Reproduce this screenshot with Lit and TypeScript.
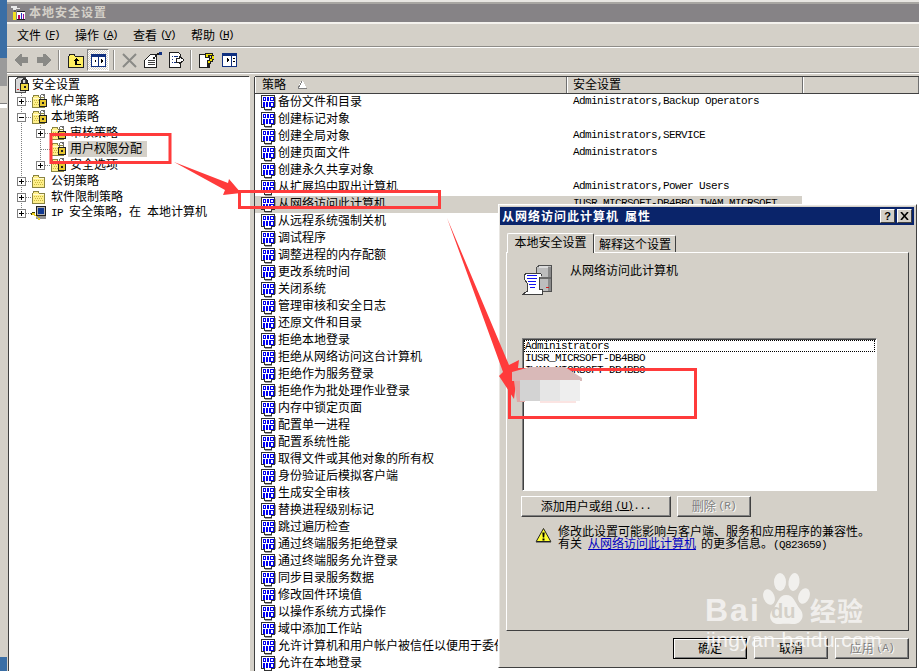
import { LitElement, html, css, svg } from "lit";
import { customElement } from "lit/decorators.js";

const policyIcon = html`<svg class="ic17" width="17" height="17" viewBox="0 0 17 17" shape-rendering="crispEdges">
  <path d="M1.500 1.500H14.500V13.500H11.500V15.500H4.500V13.500H1.500Z" fill="#fff" stroke="#303030"/>
  <path d="M15 3h1v10h-1zM5 16h7v1H5z" fill="#a0a0a0"/>
  <g fill="#0000f0">
    <path d="M3 3h3v4H3zM7 3h2v4H7zM10 3h4v4h-4z"/>
    <path d="M3 8h2v5H3zM6 8h2v5H6zM9 8h5v5H9z"/>
  </g>
  <g fill="#fff"><path d="M4 4h1v2H4zM11 4h2v2h-2zM10.500 9h2v3h-2z"/></g>
</svg>`;

const folder = svg`
  <path d="M1.500 4.500L3 2.500H7L8.500 4.500H13.500V14.500H1.500Z" fill="#ffef8a" stroke="#8a8440"/>
  <path d="M2 5h11v1H2z" fill="#fffbd0"/>
  <path d="M3 7h1v1H3zM5 7h1v1H5zM7 7h1v1H7zM9 7h1v1H9zM11 7h1v1h-1zM4 9h1v1H4zM6 9h1v1H6zM8 9h1v1H8zM10 9h1v1h-1zM3 11h1v1H3zM5 11h1v1H5zM7 11h1v1H7zM9 11h1v1H9zM11 11h1v1h-1z" fill="#c8b840"/>
`;

const lock = svg`
  <path d="M9.500 6V3.500Q9.500 1.500 11.500 1.500Q13.500 1.500 13.500 3.500V6" fill="none" stroke="#707070" stroke-width="1.400"/>
  <path d="M8.500 6.500H15.500V13.500H8.500Z" fill="#e8c830" stroke="#202020"/>
  <path d="M11 9h2v2h-2z" fill="#202020"/>
`;

const lockFolder = html`<svg class="ic" width="16" height="16" viewBox="0 0 16 16" shape-rendering="crispEdges">${folder}${lock}</svg>`;
const plainFolder = html`<svg class="ic" width="16" height="16" viewBox="0 0 16 16" shape-rendering="crispEdges">${folder}</svg>`;

const rootIcon = html`<svg class="ic" width="16" height="16" viewBox="0 0 16 16" shape-rendering="crispEdges">
  <path d="M1.500 2.500L4 .5H11V15.500H1.500Z" fill="#d8d8d8" stroke="#505050"/>
  <path d="M3 12h2v1H3z" fill="#e02020"/>
  <path d="M8 6V4Q8 2 10.500 2Q13 2 13 4V6" fill="none" stroke="#303030" stroke-width="1.400"/>
  <path d="M6.500 6.500H14.500V13.500H6.500Z" fill="#f0d840" stroke="#202020"/>
  <path d="M10 9h2v2h-2z" fill="#202020"/>
</svg>`;

const ipIcon = html`<svg class="ic" width="16" height="16" viewBox="0 0 16 16" shape-rendering="crispEdges">
  <path d="M5.500 1.500H14.500V10.500H5.500Z" fill="#b0b0b0" stroke="#202020"/>
  <path d="M7 3h6v6H7z" fill="#103890"/>
  <path d="M5 11h10v3H5z" fill="#909090"/>
  <path d="M1 8h3v2H1zM3 10h2v1H3zM5 11h1v1H5zM6 12h1v1H6zM7 13h2v2H7z" fill="#f0d020"/>
  <path d="M1 7h3v1H1zM0 8h1v2H0z" fill="#404000"/>
</svg>`;

const appIcon = html`<svg class="tb-app" width="16" height="16" viewBox="0 0 16 16" shape-rendering="crispEdges">
  <path d="M1 1h6v2h3v1H6v1H3V3H1z" fill="#e8e8e8"/>
  <path d="M4 5h2v2H4z" fill="#606060"/>
  <path d="M3 7h3v8H3z" fill="#f0e020"/>
  <path d="M7 6h8v9H7z" fill="#fff"/>
  <path d="M8 10h2v4H8z" fill="#c00060"/><path d="M11 8h1v6h-1z" fill="#2030c0"/><path d="M13 9h1v5h-1z" fill="#a000a0"/>
  <path d="M7 6h8v1H7zM7 14h8v1H7z" fill="#202020"/>
</svg>`;

const backArrow = html`<svg width="14" height="12" viewBox="0 0 14 12" shape-rendering="crispEdges"><path d="M6 0h2v3h6v6H8v3H6L0 6z" fill="#8a8a86"/></svg>`;
const fwdArrow = html`<svg width="14" height="12" viewBox="0 0 14 12" shape-rendering="crispEdges"><path d="M8 0H6v3H0v6h6v3h2l6-6z" fill="#8a8a86"/></svg>`;
const upIcon = html`<svg width="16" height="15" viewBox="0 0 16 15" shape-rendering="crispEdges">
  <path d="M.5 3.500L2 1.500H6L7.500 3.500H15.500V14.500H.5Z" fill="#ffef60" stroke="#202020"/>
  <path d="M8 5l3 3H9v3h4v1H7V8H5z" fill="#000"/>
</svg>`;
const treeToggle = html`<svg width="15" height="13" viewBox="0 0 15 13" shape-rendering="crispEdges">
  <path d="M.5 .5H14.500V12.500H.5Z" fill="#fff" stroke="#103080"/>
  <path d="M1 1h13v2H1zM7 1h1v11H7z" fill="#103080"/>
  <path d="M5 5v4L3 7zM10 5v4l2-2z" fill="#000"/>
</svg>`;
const deleteIcon = html`<svg width="15" height="15" viewBox="0 0 15 15"><path d="M1 1L14 14M14 1L1 14" stroke="#8a8a86" stroke-width="2"/></svg>`;
const propIcon = html`<svg width="18" height="16" viewBox="0 0 18 16" shape-rendering="crispEdges">
  <path d="M2.500 6.500L6.500 2.500H12.500V15.500H.5V8.500Z" fill="#fff" stroke="#202020"/>
  <path d="M4 8h7v1H4zM4 10h7v1H4zM4 12h7v1H4z" fill="#404040"/>
  <path d="M9 5h2v2H9zM11 3h2v2h-2zM13 1h2v2h-2z" fill="#202020"/>
  <path d="M15 0h3v3h-3z" fill="#103080"/>
</svg>`;
const exportIcon = html`<svg width="15" height="16" viewBox="0 0 15 16" shape-rendering="crispEdges">
  <path d="M.5 .5H9.500L11.500 2.500V15.500H.5Z" fill="#fff" stroke="#202020"/>
  <path d="M3 4h1v1H3zM5 4h4v1H5zM3 7h1v1H3zM3 10h1v1H3zM5 10h3v1H5z" fill="#103080"/>
  <path d="M7 6h3V4l5 4-5 4v-2H7z" fill="#fff" stroke="#202020" stroke-width="1"/>
</svg>`;
const helpIcon = html`<svg width="15" height="16" viewBox="0 0 15 16" shape-rendering="crispEdges">
  <path d="M.5 2.500H10.500V15.500H.5Z" fill="#fff" stroke="#202020"/>
  <path d="M6 3V1h7v2h2v4h-2v2h-2v2H8V8h2V6h2V3H9v2H6z" fill="#f0e000" stroke="#202020" stroke-width="1"/>
  <path d="M8 12h3v3H8z" fill="#202020"/>
</svg>`;
const panelIcon = html`<svg width="15" height="14" viewBox="0 0 15 14" shape-rendering="crispEdges">
  <path d="M.5 .5H14.500V13.500H.5Z" fill="#fff" stroke="#103080"/>
  <path d="M1 1h13v2H1zM9 1h1v12H9z" fill="#103080"/>
  <path d="M5 5l3 2-3 2zM11 5h2v1h-2zM11 8h2v1h-2z" fill="#000"/>
</svg>`;
const scrollServer = html`<svg class="srv" width="31" height="32" viewBox="0 0 31 32" shape-rendering="crispEdges">
  <path d="M14.500 2.500L17 .5H29.500V26.500H14.500Z" fill="#bdbdbd" stroke="#505050"/>
  <path d="M26 2h3v24h-3z" fill="#8a8a8a"/>
  <path d="M17 1h9v2H17z" fill="#dcdcdc"/>
  <path d="M15 12h14v2H15z" fill="#6a6a6a"/>
  <path d="M24 22h3v1h-3z" fill="#d02020"/>
  <path d="M4.500 8.500H18.500Q20 10 18.500 11.500L17 12.500V24.500H20.500V29.500H.5L5.500 26V19L2.500 14V9.500Z" fill="#fff" stroke="#404040"/>
  <path d="M5 10h10v1H5zM5 13h10v1H5zM6 16h8v1H6zM7 19h7v1H7zM8 22h5v1H8z" fill="#1010f0"/>
</svg>`;
const warnIcon = html`<svg class="warn" width="17" height="17" viewBox="0 0 17 17">
  <path d="M8.500 1.500L15.800 14.500H1.200Z" fill="#ffff30" stroke="#202020" stroke-linejoin="round"/>
  <path d="M1 15.500H16" stroke="#808080"/>
  <path d="M7.300 5.500h2.400L9.200 10.500H7.800Z" fill="#000"/><rect x="7.500" y="11.500" width="2" height="2" fill="#000"/>
</svg>`;

const arrowUp = html`<svg class="sort" width="9" height="8" viewBox="0 0 9 8" shape-rendering="crispEdges"><path d="M4 0h1v1h1v2h1v2h1v2H0V5h1V3h1V1h1z" fill="#fff"/><path d="M4 0L0 7.500H8.500" fill="none" stroke="#808080"/></svg>`;

const policies: [string, string][] = [
  ["备份文件和目录", "Administrators,Backup Operators"],
  ["创建标记对象", ""],
  ["创建全局对象", "Administrators,SERVICE"],
  ["创建页面文件", "Administrators"],
  ["创建永久共享对象", ""],
  ["从扩展坞中取出计算机", "Administrators,Power Users"],
  ["从网络访问此计算机", "IUSR_MICRSOFT-DB4BBO,IWAM_MICRSOFT"],
  ["从远程系统强制关机", ""],
  ["调试程序", ""],
  ["调整进程的内存配额", ""],
  ["更改系统时间", ""],
  ["关闭系统", ""],
  ["管理审核和安全日志", ""],
  ["还原文件和目录", ""],
  ["拒绝本地登录", ""],
  ["拒绝从网络访问这台计算机", ""],
  ["拒绝作为服务登录", ""],
  ["拒绝作为批处理作业登录", ""],
  ["内存中锁定页面", ""],
  ["配置单一进程", ""],
  ["配置系统性能", ""],
  ["取得文件或其他对象的所有权", ""],
  ["身份验证后模拟客户端", ""],
  ["生成安全审核", ""],
  ["替换进程级别标记", ""],
  ["跳过遍历检查", ""],
  ["通过终端服务拒绝登录", ""],
  ["通过终端服务允许登录", ""],
  ["同步目录服务数据", ""],
  ["修改固件环境值", ""],
  ["以操作系统方式操作", ""],
  ["域中添加工作站", ""],
  ["允许计算机和用户帐户被信任以便用于委任", ""],
  ["允许在本地登录", ""],
];

function twisty(kind: string, up = true, down = true) {
  const dots = "#808080";
  return html`<svg class="tw" width="19" height="16" viewBox="0 0 19 16" shape-rendering="crispEdges">
    ${up ? svg`<path d="M9.500 0V8" stroke=${dots} stroke-dasharray="1 1"/>` : ""}
    ${down ? svg`<path d="M9.500 8V16" stroke=${dots} stroke-dasharray="1 1"/>` : ""}
    <path d="M9.500 8.500H19" stroke=${dots} stroke-dasharray="1 1"/>
    ${kind === "plus" || kind === "minus"
      ? svg`<path d="M5.500 4.500H13.500V12.500H5.500Z" fill="#fff" stroke="#808080"/><path d="M7 8.500H12" stroke="#000"/>`
      : ""}
    ${kind === "plus" ? svg`<path d="M9.500 6V11" stroke="#000"/>` : ""}
  </svg>`;
}
const guide = html`<svg class="tw" width="19" height="16" viewBox="0 0 19 16" shape-rendering="crispEdges"><path d="M9.500 0V16" stroke="#808080" stroke-dasharray="1 1"/></svg>`;

@customElement("app-root")
export class AppRoot extends LitElement {
  static styles = css`
    :host {
      display: block;
      width: 919px;
      height: 671px;
      position: relative;
      overflow: hidden;
      background: #d4d0c8;
      font-family: "Noto Sans CJK SC", "Liberation Sans", sans-serif;
      font-size: 12px;
      line-height: 16px;
      color: #000;
    }
    .page { display: flex; width: 919px; height: 671px; }
    .strip { width: 7px; flex: none; display: flex; flex-direction: column; background: #d4d0c8; }
    .s-blue { height: 58px; background: #3a6ea5; }
    .s-gray { height: 28px; background: #9a9a9a; }
    .s-face { flex: 1; background: #d4d0c8; border-top: 1px solid #fff; }
    .s-white { height: 3px; background: #fff; }
    .s-foot { height: 14px; background: #3a6ea5; }
    .s-glyph { height: 17px; background: #d4d0c8; border-bottom: 1px solid #808080; }

    .win { flex: 1; min-width: 0; display: flex; flex-direction: column; height: 671px; overflow: hidden; }
    .m { font-family: "Liberation Mono", monospace; font-size: 11px; letter-spacing: -0.6px; }
    .u { text-decoration: underline; }

    .topedge { height: 2px; background: #e8e6e2; border-bottom: 2px solid #a8a6a2; flex: none; }
    .title {
      height: 18px; flex: none; background: #868386; color: #d4d0c8; font-weight: 700;
      display: flex; align-items: center; padding-left: 3px; letter-spacing: 1px;
      border-bottom: 2px solid #f4f2ee;
    }
    .title span { line-height: 14px; padding-bottom: 2px; }
    .tb-app { margin-right: 3px; flex: none; }
    .menu {
      height: 23px; flex: none; display: flex; gap: 10px; align-items: center; padding-left: 10px;
      border-bottom: 1px solid #8e8c88; box-sizing: border-box;
    }
    .menu span.item { display: inline-flex; width: 48px; white-space: nowrap; }
    .menu .m { margin-left: 3px; letter-spacing: -1.6px; }
    .tools {
      height: 24px; flex: none; display: flex; align-items: center; padding-left: 7px;
      border-top: 1px solid #fff; border-bottom: 1px solid #8e8c88; box-sizing: content-box;
    }
    .t { display: flex; justify-content: center; align-items: center; height: 22px; flex: none; }
    .w14 { width: 14px; }
    .w15 { width: 15px; }
    .w16 { width: 16px; }
    .w18 { width: 18px; }
    .l3 { margin-left: 3px; }
    .l4 { margin-left: 4px; }
    .l6 { margin-left: 6px; }
    .l7 { margin-left: 7px; }
    .l8 { margin-left: 8px; }
    .l9 { margin-left: 9px; }
    .sep { width: 2px; height: 20px; flex: none; border-left: 1px solid #8e8c88; border-right: 1px solid #fff; box-sizing: border-box; }
    .pressed {
      width: 22px; height: 22px; box-sizing: border-box;
      border: 1px solid; border-color: #808080 #fff #fff #808080;
      background: repeating-conic-gradient(#fff 0 25%, #d4d0c8 0 50%) 0 0 / 2px 2px;
    }
    .gapband { height: 3px; flex: none; border-top: 1px solid #fff; }

    .body { flex: 1; min-height: 0; display: flex; padding-left: 1px; }
    .tree {
      width: 240px; flex: none; background: #fff; border-left: 1px solid #404040; border-top: 1px solid #404040;
      margin-top: -1px; overflow: hidden;
    }
    .split { width: 6px; flex: none; background: #d4d0c8; border-right: 1px solid #404040; box-sizing: border-box; border-left: 1px solid #fff; }
    .tr { display: flex; align-items: center; height: 16px; padding-left: 3px; white-space: nowrap; }
    .tr .ic { flex: none; }
    .tr-root { padding-left: 5px; }
    .tr .lbl { margin-left: 4px; line-height: 14px; padding-bottom: 2px; }
    .tr-root .lbl { margin-left: 2px; }
    .tr .sel { margin-left: 2px; padding: 0 2px 2px; height: 16px; line-height: 14px; background: #d4d0c8; width: 79px; box-sizing: border-box; }
    .gap6 { margin-left: 6px; }

    .list { flex: 1; min-width: 0; background: #fff; display: flex; flex-direction: column; overflow: hidden; margin-top: -1px; border-top: 1px solid #404040; }
    .hdr { display: flex; height: 17px; background: #d4d0c8; flex: none; border-bottom: 1px solid #404040; box-sizing: border-box; }
    .hc {
      box-sizing: border-box; border-left: 1px solid #fff; border-right: 1px solid #707070; display: flex; align-items: center;
    }
    .hc span { line-height: 13px; padding-bottom: 3px; }
    .hc1 { width: 312px; padding-left: 6px; }
    .hc2 { width: 236px; padding-left: 5px; }
    .hc3 { flex: 1; }
    .sort { margin-left: 12px; }
    .row { display: flex; height: 17px; width: 547px; align-items: center; white-space: nowrap; overflow: hidden; flex: none; }
    .row.on { background: #d4d0c8; }
    .c1 { width: 312px; flex: none; display: flex; align-items: center; padding-left: 5px; box-sizing: border-box; }
    .c1 .ic17 { flex: none; margin-right: 1px; }
    .c1 span { line-height: 13px; padding-bottom: 4px; }
    .c2 { line-height: 15px; padding: 0 0 2px 6px; flex: 1; }

    .dlg {
      position: absolute; left: 498px; top: 204px; width: 419px; height: 464px; box-sizing: border-box;
      background: #d4d0c8; border: 1px solid; border-color: #fff #404040 #404040 #fff;
      padding: 2px 2px 0 1px; display: flex; flex-direction: column;
      box-shadow: inset 1px 1px 0 #e8e6e2;
    }
    .dt {
      height: 18px; flex: none; background: #0a246a; color: #fff; font-weight: 700; letter-spacing: 1px;
      display: flex; align-items: center; padding-left: 2px; white-space: nowrap;
    }
    .dt .g { flex: 1; }
    .dt .sp { width: 6px; }
    .tbtn {
      width: 15px; height: 14px; box-sizing: border-box; background: #d4d0c8; color: #000; margin-right: 2px;
      border: 1px solid; border-color: #fff #404040 #404040 #fff; display: flex; align-items: center; justify-content: center;
      font: 700 11px/12px "Liberation Sans", sans-serif; letter-spacing: 0;
    }
    .tbtn svg { display: block; }
    .tabs { display: flex; align-items: flex-end; height: 26px; margin-top: 1px; padding-left: 7px; flex: none; }
    .tab {
      box-sizing: border-box; border: 1px solid; border-color: #fff #404040 transparent #fff; border-bottom: 0;
      border-radius: 2px 2px 0 0; display: flex; justify-content: center; align-items: center;
    }
    .tab1 { width: 87px; height: 20px; padding-bottom: 4px; position: relative; z-index: 1; margin-bottom: -1px; background: #d4d0c8; }
    .tab2 { width: 82px; height: 17px; }
    .panel {
      margin-left: 6px; width: 403px; height: 379px; box-sizing: border-box; flex: none;
      border: 1px solid; border-color: #fff #404040 #404040 #fff; padding: 12px 0 0 15px; display: flex; flex-direction: column;
    }
    .phead { display: flex; gap: 17px; height: 32px; flex: none; }
    .srv { flex: none; }
    .phead .tx { line-height: 13px; margin-top: -2px; }
    .lb {
      margin-top: 41px; width: 355px; height: 153px; box-sizing: border-box; background: #fff; flex: none;
      border: 1px solid; border-color: #808080 #fff #fff #808080; box-shadow: inset 1px 1px 0 #404040; padding: 1px 1px 0 1px;
    }
    .li { height: 12px; line-height: 12px; padding-left: 1px; white-space: nowrap; box-sizing: border-box; }
    .li.f { outline: 1px dotted #000; outline-offset: -1px; }
    .lbtns { display: flex; gap: 6px; margin-top: 5px; margin-left: -1px; flex: none; }
    .btn {
      height: 21px; box-sizing: border-box; background: #d4d0c8; border: 1px solid; padding-bottom: 2px;
      border-color: #fff #404040 #404040 #fff; box-shadow: inset -1px -1px 0 #808080;
      display: flex; align-items: center; justify-content: center; white-space: nowrap; flex: none;
    }
    .b1 { width: 150px; }
    .b2 { width: 74px; }
    .off { color: #808080; text-shadow: 1px 1px 0 #fff; }
    .note { display: flex; margin: 8px 0 0 13px; gap: 6px; flex: none; }
    .warn { flex: none; margin-top: 2px; }
    .note .lines { line-height: 12px; white-space: nowrap; }
    .note .m { line-height: 10px; }
    .note a { color: #0000c0; text-decoration: underline; margin: 0 5px 0 6px; }
    .dbtns { display: flex; gap: 7px; margin: 7px 0 0 173px; flex: none; }
    .dbtns .btn { width: 74px; }
    .dbtns .def { outline: 1px solid #000; outline-offset: -1px; border-color: #000; box-shadow: inset 1px 1px 0 #fff, inset -1px -1px 0 #808080; }

    .ann { position: absolute; left: 0; top: 0; pointer-events: none; }

    .mark { position: absolute; left: 705px; top: 570px; width: 170px; height: 84px; color: rgba(255,255,255,.68); pointer-events: none; }
    .bai { position: absolute; left: 0; top: 22px; font: 700 32px/36px "Liberation Sans", sans-serif; letter-spacing: 2px; }
    .paw { position: absolute; left: 56px; top: 2px; }
    .du { position: absolute; left: 66px; top: 30px; font: 700 20px/22px "Liberation Sans", sans-serif; color: #d4d0c8; }
    .jy { position: absolute; left: 105px; top: 24px; font: 700 26px/32px "Noto Sans CJK SC", sans-serif; letter-spacing: 1px; }
    .url { position: absolute; left: 1px; top: 58px; font: 400 21px/24px "Liberation Sans", sans-serif; letter-spacing: .4px; white-space: nowrap; color: rgba(255,255,255,.8); }
  `;

  private tree() {
    return html`<div class="tree">
      <div class="tr tr-root">${rootIcon}<span class="lbl">安全设置</span></div>
      <div class="tr">${twisty("plus")}${lockFolder}<span class="lbl">帐户策略</span></div>
      <div class="tr">${twisty("minus")}${lockFolder}<span class="lbl">本地策略</span></div>
      <div class="tr">${guide}${twisty("plus")}${lockFolder}<span class="lbl">审核策略</span></div>
      <div class="tr">${guide}${twisty("tee")}${lockFolder}<span class="sel">用户权限分配</span></div>
      <div class="tr">${guide}${twisty("plus", true, false)}${lockFolder}<span class="lbl">安全选项</span></div>
      <div class="tr">${twisty("plus")}${plainFolder}<span class="lbl">公钥策略</span></div>
      <div class="tr">${twisty("plus")}${plainFolder}<span class="lbl">软件限制策略</span></div>
      <div class="tr">${twisty("plus", true, false)}${ipIcon}<span class="lbl"><span class="m">IP </span> 安全策略，在<span class="gap6">本地计算机</span></span></div>
    </div>`;
  }

  private listPane() {
    return html`<div class="list">
      <div class="hdr">
        <div class="hc hc1"><span>策略</span>${arrowUp}</div>
        <div class="hc hc2"><span>安全设置</span></div>
        <div class="hc hc3"></div>
      </div>
      ${policies.map(
        ([name, val], i) => html`<div class="row ${i === 6 ? "on" : ""}">
          <div class="c1">${policyIcon}<span>${name}</span></div>
          <div class="c2 m">${val}</div>
        </div>`,
      )}
    </div>`;
  }

  private dialog() {
    return html`<div class="dlg">
      <div class="dt">
        <span>从网络访问此计算机</span><span class="sp"></span><span>属性</span><span class="g"></span>
        <div class="tbtn">?</div>
        <div class="tbtn"><svg width="9" height="8" viewBox="0 0 9 8"><path d="M1 0L8 8M8 0L1 8" stroke="#000" stroke-width="1.600"/></svg></div>
      </div>
      <div class="tabs">
        <div class="tab tab1">本地安全设置</div>
        <div class="tab tab2">解释这个设置</div>
      </div>
      <div class="panel">
        <div class="phead">${scrollServer}<span class="tx">从网络访问此计算机</span></div>
        <div class="lb">
          <div class="li f m">Administrators</div>
          <div class="li m">IUSR_MICRSOFT-DB4BBO</div>
          <div class="li m">IWAM_MICRSOFT-DB4BBO</div>
        </div>
        <div class="lbtns">
          <div class="btn b1">添加用户或组&nbsp;<span class="m"><span class="u">(U)</span>...</span></div>
          <div class="btn b2 off">删除&nbsp;<span class="m">(R)</span></div>
        </div>
        <div class="note">
          ${warnIcon}
          <div class="lines">
            修改此设置可能影响与客户端、服务和应用程序的兼容性。<br />
            有关<a>从网络访问此计算机</a>的更多信息。<span class="m">(Q823659)</span>
          </div>
        </div>
      </div>
      <div class="dbtns">
        <div class="btn def">确定</div>
        <div class="btn">取消</div>
        <div class="btn off">应用&nbsp;<span class="m">(A)</span></div>
      </div>
    </div>`;
  }

  private annotations() {
    return html`<svg class="ann" width="919" height="671" viewBox="0 0 919 671">
      <g fill="none" stroke="#ff3b3b" stroke-width="3">
        <rect x="51" y="134.500" width="119" height="28"/>
        <rect x="239.500" y="191.500" width="200" height="16"/>
        <rect x="509.500" y="369.500" width="186" height="48"/>
      </g>
      <g fill="#ff3b3b">
        <polygon points="174,162 228,183 229,179 241,193 223,195 225,190"/>
        <polygon points="447,218 509,365 519,360 514,399 499,376 503,372"/>
      </g>
      <path d="M512 372L530 367H565L582 378V381H512Z" fill="#d9b9b8"/>
      <path d="M514 381H520V401H525V402H517Z" fill="#e0a8a6"/>
      <rect x="520" y="380" width="20" height="21" fill="#d3d3d3"/>
      <rect x="540" y="380" width="20" height="21" fill="#e6e6e6"/>
      <rect x="560" y="380" width="20" height="21" fill="#eeeeee"/>
      <rect x="540" y="401" width="36" height="2" fill="#fbe4e2"/>
    </svg>`;
  }

  private watermark() {
    return html`<div class="mark">
      <span class="bai">Bai</span>
      <svg class="paw" width="50" height="56" viewBox="0 0 50 56">
        <g fill="currentColor">
          <ellipse cx="8" cy="25" rx="5.500" ry="8" transform="rotate(-22 8 25)"/>
          <ellipse cx="19" cy="10" rx="6" ry="9"/>
          <ellipse cx="33" cy="10" rx="5.500" ry="9" transform="rotate(8 33 10)"/>
          <ellipse cx="43" cy="24" rx="5.500" ry="8" transform="rotate(22 43 24)"/>
          <path d="M25 23C33 23 34 31 39 37C45 44 40 53 31 52C27 51.500 23 51.500 19 52C10 53 6 44 12 37C17 31 18 23 25 23Z"/>
        </g>
      </svg>
      <span class="du">du</span>
      <span class="jy">经验</span>
      <span class="url">jingyan.baidu.com</span>
    </div>`;
  }

  render() {
    return html`<div class="page">
        <div class="strip">
          <div class="s-blue"></div>
          <div class="s-gray"></div>
          <div class="s-glyph"></div>
          <div class="s-white"></div>
          <div class="s-face"></div>
          <div class="s-foot"></div>
        </div>
        <div class="win">
          <div class="topedge"></div>
          <div class="title">${appIcon}<span>本地安全设置</span></div>
          <div class="menu">
            <span class="item">文件<span class="m">(<span class="u">F</span>)</span></span>
            <span class="item">操作<span class="m">(<span class="u">A</span>)</span></span>
            <span class="item">查看<span class="m">(<span class="u">V</span>)</span></span>
            <span class="item">帮助<span class="m">(<span class="u">H</span>)</span></span>
          </div>
          <div class="tools">
            <div class="t w14">${backArrow}</div>
            <div class="t w14 l9">${fwdArrow}</div>
            <div class="sep l7"></div>
            <div class="t w16 l8">${upIcon}</div>
            <div class="t pressed l3">${treeToggle}</div>
            <div class="sep l4"></div>
            <div class="t w15 l7">${deleteIcon}</div>
            <div class="t w18 l7">${propIcon}</div>
            <div class="t w15 l7">${exportIcon}</div>
            <div class="sep l6"></div>
            <div class="t w15 l7">${helpIcon}</div>
            <div class="t w15 l8">${panelIcon}</div>
          </div>
          <div class="gapband"></div>
          <div class="body">
            ${this.tree()}
            <div class="split"></div>
            ${this.listPane()}
          </div>
        </div>
      </div>
      ${this.dialog()} ${this.annotations()} ${this.watermark()}`;
  }
}
